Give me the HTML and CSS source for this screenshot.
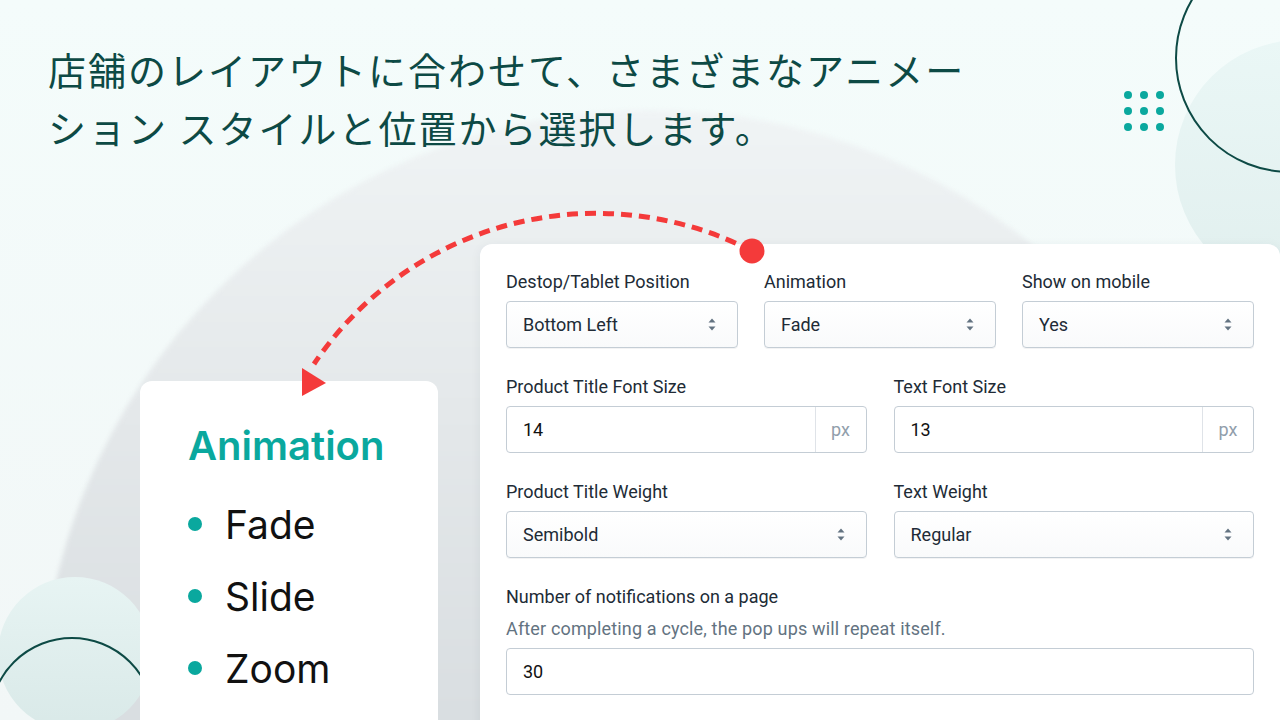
FILE: index.html
```html
<!DOCTYPE html>
<html lang="ja">
<head>
  <meta charset="UTF-8" />
  <meta name="viewport" content="width=device-width, initial-scale=1.0"/>
  <title>Animation settings</title>
  <link rel="stylesheet" href="styles.css">
</head>

<body>
  <div class="page">
    <!-- background shapes -->
    <div class="bg-dome"></div>
    <div class="bg-blob-tr"></div>
    <div class="bg-ring-tr"></div>
    <div class="bg-blob-bl"></div>
    <div class="bg-ring-bl"></div>
    <div class="dots">
      <span></span><span></span><span></span>
      <span></span><span></span><span></span>
      <span></span><span></span><span></span>
    </div>

    <h1 class="headline">店舗のレイアウトに合わせて、さまざまなアニメー<br>ション スタイルと位置から選択します。</h1>

    <main class="stage">
      <section class="anim-card">
        <h2>Animation</h2>
        <ul>
          <li>Fade</li>
          <li>Slide</li>
          <li>Zoom</li>
        </ul>
      </section>

      <section class="settings-card">
        <div class="row row-3">
          <div class="field">
            <label>Destop/Tablet Position</label>
            <div class="select"><span>Bottom Left</span><svg class="caret" width="8" height="13" viewBox="0 0 8 13"><path d="M0.5 4.5 L4 0.5 L7.5 4.5 Z M0.5 8.5 L4 12.5 L7.5 8.5 Z"/></svg></div>
          </div>
          <div class="field">
            <label>Animation</label>
            <div class="select"><span>Fade</span><svg class="caret" width="8" height="13" viewBox="0 0 8 13"><path d="M0.5 4.5 L4 0.5 L7.5 4.5 Z M0.5 8.5 L4 12.5 L7.5 8.5 Z"/></svg></div>
          </div>
          <div class="field">
            <label>Show on mobile</label>
            <div class="select"><span>Yes</span><svg class="caret" width="8" height="13" viewBox="0 0 8 13"><path d="M0.5 4.5 L4 0.5 L7.5 4.5 Z M0.5 8.5 L4 12.5 L7.5 8.5 Z"/></svg></div>
          </div>
        </div>

        <div class="row row-2">
          <div class="field">
            <label>Product Title Font Size</label>
            <div class="input"><span class="value">14</span><span class="suffix">px</span></div>
          </div>
          <div class="field">
            <label>Text Font Size</label>
            <div class="input"><span class="value">13</span><span class="suffix">px</span></div>
          </div>
        </div>

        <div class="row row-2">
          <div class="field">
            <label>Product Title Weight</label>
            <div class="select"><span>Semibold</span><svg class="caret" width="8" height="13" viewBox="0 0 8 13"><path d="M0.5 4.5 L4 0.5 L7.5 4.5 Z M0.5 8.5 L4 12.5 L7.5 8.5 Z"/></svg></div>
          </div>
          <div class="field">
            <label>Text Weight</label>
            <div class="select"><span>Regular</span><svg class="caret" width="8" height="13" viewBox="0 0 8 13"><path d="M0.5 4.5 L4 0.5 L7.5 4.5 Z M0.5 8.5 L4 12.5 L7.5 8.5 Z"/></svg></div>
          </div>
        </div>

        <div class="row">
          <div class="field">
            <label class="with-help">Number of notifications on a page</label>
            <p class="help">After completing a cycle, the pop ups will repeat itself.</p>
            <div class="input"><span class="value">30</span></div>
          </div>
        </div>
      </section>
    </main>

    <!-- dashed arrow from the settings card to the list -->
    <svg class="arrow" width="1280" height="720" viewBox="0 0 1280 720">
      <path d="M752 251 A340 340 0 0 0 314 364" fill="none" stroke="#f43a3a" stroke-width="5" stroke-dasharray="11 7"/>
      <circle cx="752" cy="251" r="12.5" fill="#f43a3a"/>
      <polygon points="302,368 302,396 326,383" fill="#f43a3a"/>
    </svg>
  </div>
</body>
</html>
```

FILE: styles.css
```css
* {
  margin: 0;
  padding: 0;
  box-sizing: border-box;
}

body {
  background: #f4fbfa;
  font-family: Roboto, "Liberation Sans", sans-serif;
}

.page {
  position: relative;
  width: 1280px;
  height: 720px;
  overflow: hidden;
  background: linear-gradient(to bottom, #f4fcfb, #f2f7f7);
}

/* background shapes */
.bg-dome {
  position: absolute;
  left: 40px;
  top: 110px;
  width: 1220px;
  height: 1220px;
  border-radius: 50%;
  background: linear-gradient(to bottom, #f0f4f5 0%, #e4e8ea 25%, #d9dee1 50%);
  filter: blur(2px);
}

.bg-blob-tr {
  position: absolute;
  left: 1175px;
  top: 40px;
  width: 250px;
  height: 250px;
  border-radius: 50%;
  background: linear-gradient(to bottom, #eaf7f6, #e1efee);
}

.bg-ring-tr {
  position: absolute;
  left: 1175px;
  top: -57px;
  width: 230px;
  height: 230px;
  border-radius: 50%;
  border: 2px solid #0d4a45;
}

.bg-blob-bl {
  position: absolute;
  left: -2px;
  top: 577px;
  width: 154px;
  height: 154px;
  border-radius: 50%;
  background: linear-gradient(to bottom, #e7f4f3, #d9e9e8);
}

.bg-ring-bl {
  position: absolute;
  left: -11px;
  top: 637px;
  width: 166px;
  height: 166px;
  border-radius: 50%;
  border: 2px solid #0d4a45;
}

.dots {
  position: absolute;
  left: 1124px;
  top: 91px;
  display: grid;
  grid-template-columns: repeat(3, 8px);
  gap: 8px;
}

.dots span {
  width: 8px;
  height: 8px;
  border-radius: 50%;
  background: #0aa89e;
}

.headline {
  position: relative;
  padding: 40px 0 0 48px;
  font-family: "Noto Sans CJK JP", sans-serif;
  font-size: 38px;
  font-weight: 400;
  line-height: 58px;
  letter-spacing: 2px;
  color: #0d4a45;
}

/* cards */
.stage {
  position: relative;
  display: flex;
  align-items: flex-start;
  gap: 42px;
  margin-top: 88px;
  padding-left: 140px;
}

.anim-card {
  width: 298px;
  height: 360px;
  margin-top: 137px;
  padding: 41px 0 0 48px;
  background: #fff;
  border-radius: 12px;
  font-family: Inter, "Noto Sans", sans-serif;
}

.anim-card h2 {
  font-size: 40px;
  font-weight: 600;
  line-height: 48px;
  color: #0aa89e;
}

.anim-card ul {
  list-style: none;
  margin-top: 18px;
}

.anim-card li {
  display: flex;
  align-items: center;
  gap: 23px;
  height: 72px;
  font-size: 39px;
  color: #111;
}

.anim-card li::before {
  content: "";
  width: 14px;
  height: 14px;
  border-radius: 50%;
  background: #0aa89e;
}

.settings-card {
  width: 800px;
  height: 520px;
  padding: 27px 26px 0;
  background: #fff;
  border-radius: 12px;
  box-shadow: 0 2px 12px rgba(30, 50, 60, 0.06);
}

.row {
  display: grid;
  gap: 26px;
  margin-bottom: 28px;
}

.row-3 {
  grid-template-columns: repeat(3, 1fr);
}

.row-2 {
  grid-template-columns: repeat(2, 1fr);
  gap: 27px;
}

label {
  display: block;
  font-size: 18px;
  line-height: 22px;
  color: #212b36;
  margin-bottom: 8px;
}

label.with-help {
  margin-bottom: 0;
}

.help {
  font-size: 18px;
  line-height: 22px;
  letter-spacing: 0.15px;
  color: #637381;
  margin: 10px 0 8px;
}

.select {
  display: flex;
  align-items: center;
  justify-content: space-between;
  height: 47px;
  padding: 0 21px 0 16px;
  border: 1px solid #c4cdd5;
  border-radius: 4px;
  background: linear-gradient(to bottom, #ffffff, #f9fafb);
  box-shadow: 0 1px 0 rgba(22, 29, 37, 0.05);
  font-size: 18px;
  color: #212b36;
}

.caret {
  fill: #637381;
}

.input {
  display: flex;
  height: 47px;
  border: 1px solid #c4cdd5;
  border-radius: 4px;
  background: #fff;
  font-size: 18px;
}

.input .value {
  flex: 1;
  display: flex;
  align-items: center;
  padding-left: 16px;
  color: #111;
}

.input .suffix {
  width: 51px;
  display: flex;
  align-items: center;
  justify-content: center;
  border-left: 1px solid #dfe3e8;
  color: #919eab;
}

.arrow {
  position: absolute;
  left: 0;
  top: 0;
  pointer-events: none;
}
```
